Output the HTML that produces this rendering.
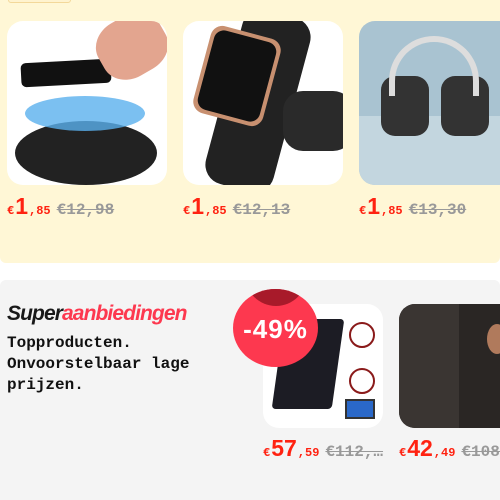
<!DOCTYPE html>
<html><head><meta charset="utf-8"><style>
*{margin:0;padding:0;box-sizing:border-box}
body{width:500px;height:500px;overflow:hidden;background:#fff;font-family:"Liberation Sans",sans-serif;position:relative}
.top{position:absolute;left:0;top:0;width:500px;height:263px;background:#fff7d6;border-radius:0 0 6px 6px}
.tag{position:absolute;left:8px;top:-6px;width:63px;height:9px;border:1px solid #f3d89a;border-radius:3px;background:#fff3cf}
.card{position:absolute;background:#fff;border-radius:16px;overflow:hidden}
.price{position:absolute;font-family:"Liberation Mono",monospace;color:#f21;font-weight:bold;white-space:nowrap}
.price .s{font-size:12px}.price .b{font-size:23px;font-family:"Liberation Sans",sans-serif;margin:0 1px}
.price .o{color:#999;text-decoration:line-through;font-size:16px;margin-left:6px}
.gray{position:absolute;left:0;top:280px;width:500px;height:220px;background:#f4f4f4;border-radius:6px 6px 0 0}
h2{position:absolute;left:7px;top:302px;font-size:21px;font-style:italic;font-weight:bold;letter-spacing:-0.9px;color:#191919}
h2 span{color:#fd384f}
.sub{position:absolute;left:7px;top:333px;font-family:"Liberation Mono",monospace;font-weight:bold;font-size:16px;line-height:21px;color:#111}
.badge{position:absolute;left:233px;top:289px;width:85px;height:78px;border-radius:50%;background:#fd384f;overflow:hidden}
.badge .d{position:absolute;left:12px;top:-45px;width:62px;height:62px;border-radius:50%;background:#a81a2a}
.badge .t{position:absolute;left:0;width:85px;top:25px;text-align:center;color:#fff;font-weight:bold;font-size:26px;letter-spacing:1px}
</style></head><body>
<div class="top"><div class="tag"></div>
<div class="card" style="left:7px;top:21px;width:160px;height:164px">
 <div style="position:absolute;left:8px;top:100px;width:142px;height:64px;border-radius:50%;background:#222"></div>
 <div style="position:absolute;left:18px;top:75px;width:120px;height:35px;border-radius:50%;background:#5ab0ee;opacity:.8"></div>
 <div style="position:absolute;left:14px;top:40px;width:90px;height:24px;background:#111;border-radius:5px;transform:rotate(-3deg)"></div>
 <div style="position:absolute;left:90px;top:-5px;width:70px;height:60px;background:#e3a58f;border-radius:40%;transform:rotate(-30deg)"></div>
</div>
<div class="card" style="left:183px;top:21px;width:160px;height:164px">
 <div style="position:absolute;left:40px;top:-10px;width:70px;height:180px;background:#222;border-radius:20px;transform:rotate(15deg)"></div>
 <div style="position:absolute;left:18px;top:10px;width:72px;height:90px;background:#c89070;border-radius:12px;transform:rotate(15deg)"></div>
 <div style="position:absolute;left:22px;top:14px;width:64px;height:82px;background:#111;border-radius:10px;transform:rotate(15deg)"></div>
 <div style="position:absolute;left:100px;top:70px;width:70px;height:60px;background:#2a2a2a;border-radius:20px"></div>
</div>
<div class="card" style="left:359px;top:21px;width:160px;height:164px;background:#a9c3d1">
 <div style="position:absolute;left:0;top:95px;width:160px;height:69px;background:#c3d6df"></div>
 <div style="position:absolute;left:22px;top:55px;width:48px;height:60px;border-radius:14px;background:#333"></div>
 <div style="position:absolute;left:82px;top:55px;width:48px;height:60px;border-radius:14px;background:#333"></div>
 <div style="position:absolute;left:30px;top:15px;width:90px;height:60px;border:6px solid #ddd;border-bottom:none;border-radius:45px 45px 0 0"></div>
</div>
<div class="price" style="left:7px;top:193px"><span class="s">€</span><span class="b">1</span><span class="s">,85</span><span class="o">€12,98</span></div>
<div class="price" style="left:183px;top:193px"><span class="s">€</span><span class="b">1</span><span class="s">,85</span><span class="o">€12,13</span></div>
<div class="price" style="left:359px;top:193px"><span class="s">€</span><span class="b">1</span><span class="s">,85</span><span class="o">€13,30</span></div>
</div>
<div class="gray"></div>
<h2>Super<span>aanbiedingen</span></h2>
<div class="sub">Topproducten.<br>Onvoorstelbaar lage<br>prijzen.</div>
<div class="card" style="left:263px;top:304px;width:120px;height:124px">
 <div style="position:absolute;left:15px;top:15px;width:60px;height:90px;background:#1c1c24;transform:skewX(-8deg);border-radius:4px"></div>
 <div style="position:absolute;left:82px;top:95px;width:30px;height:20px;background:#2a68c8;border:2px solid #333"></div>
 <div style="position:absolute;left:86px;top:18px;width:26px;height:26px;border:2px solid #8a1a1a;border-radius:50%"></div>
 <div style="position:absolute;left:86px;top:64px;width:26px;height:26px;border:2px solid #8a1a1a;border-radius:50%"></div>
</div>
<div class="card" style="left:399px;top:304px;width:120px;height:124px;background:#2a2624">
 <div style="position:absolute;left:0;top:0;width:60px;height:124px;background:#3a3532"></div>
 <div style="position:absolute;left:88px;top:20px;width:20px;height:30px;background:#b07a5c;border-radius:50%"></div>
</div>
<div class="badge"><div class="d"></div><div class="t">-49%</div></div>
<div class="price" style="left:263px;top:435px"><span class="s">€</span><span class="b">57</span><span class="s">,59</span><span class="o">€112,…</span></div>
<div class="price" style="left:399px;top:435px"><span class="s">€</span><span class="b">42</span><span class="s">,49</span><span class="o">€108,…</span></div>
</body></html>
